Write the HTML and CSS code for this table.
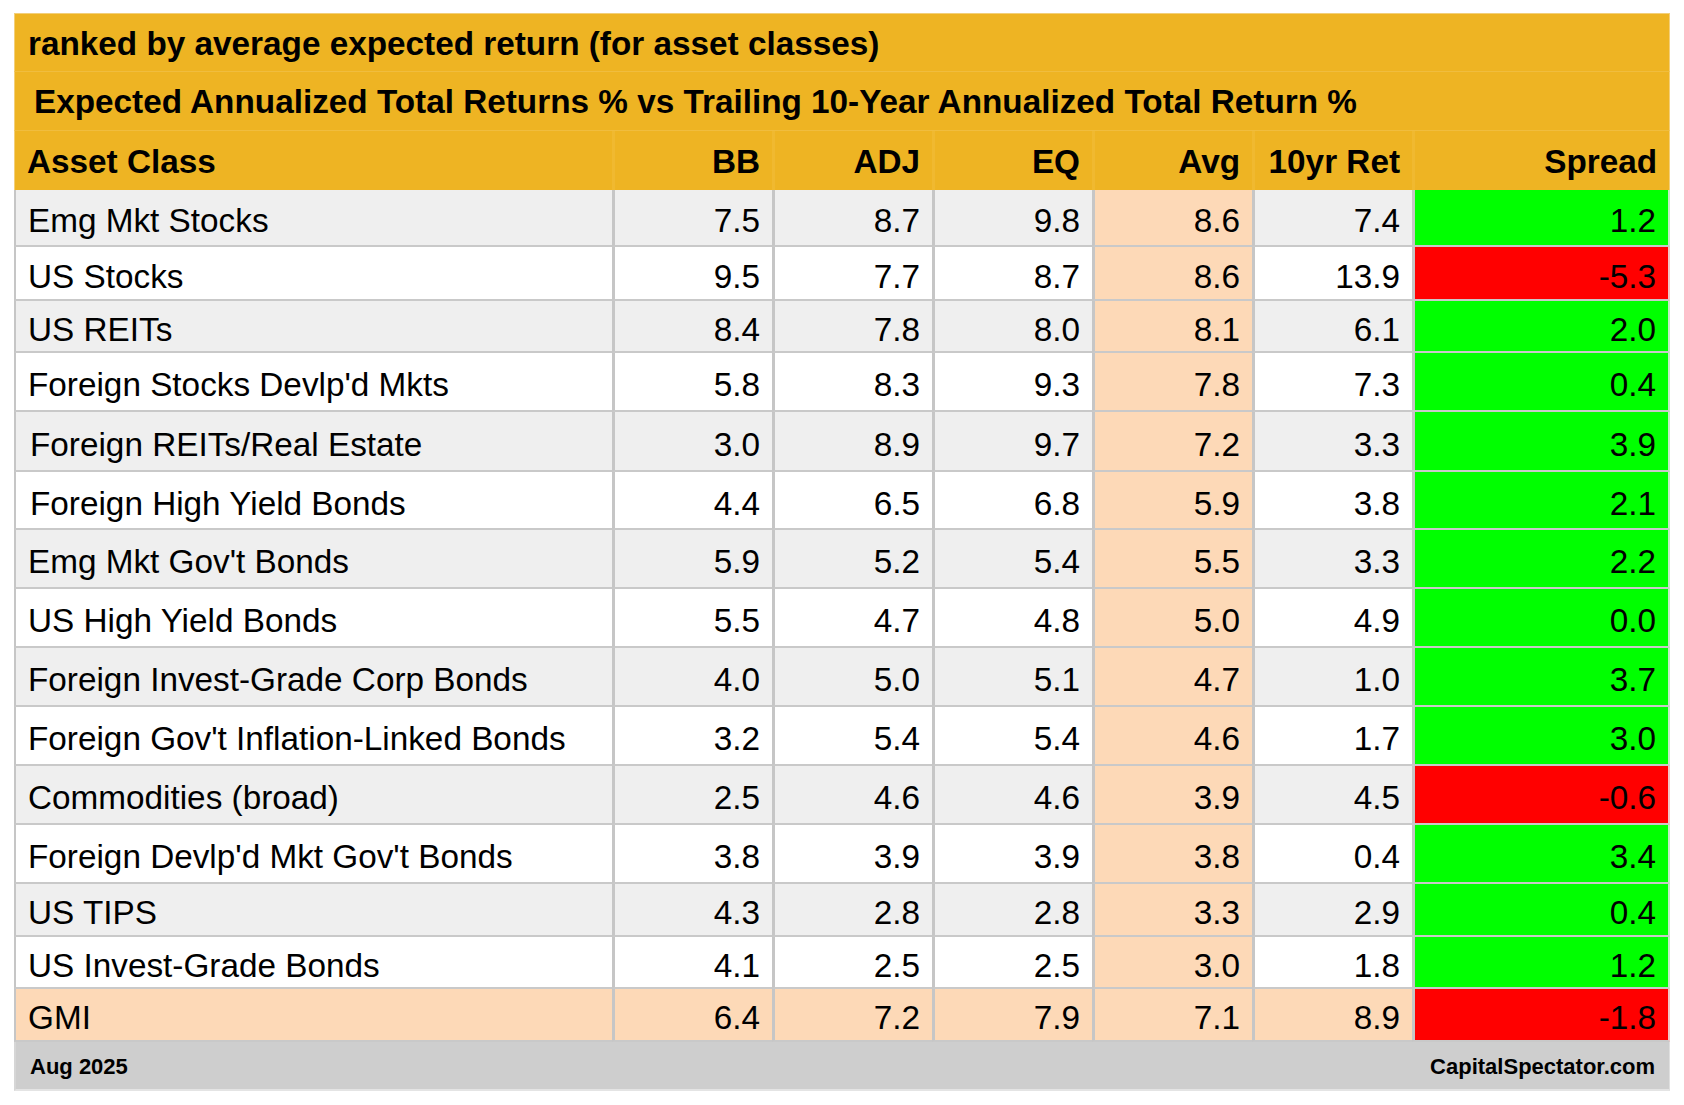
FILE: index.html
```html
<!DOCTYPE html>
<html lang="en">
<head>
<meta charset="utf-8">
<title>Expected Annualized Total Returns</title>
<link rel="stylesheet" href="styles.css">
</head>
<body>
<table class="grid">
  <colgroup>
    <col class="c-name">
    <col class="c-num">
    <col class="c-num">
    <col class="c-num">
    <col class="c-num">
    <col class="c-num">
    <col class="c-spread">
  </colgroup>
  <thead>
    <tr class="title1"><th colspan="7">ranked by average expected return (for asset classes)</th></tr>
    <tr class="title2"><th colspan="7">Expected Annualized Total Returns % vs Trailing 10-Year Annualized Total Return %</th></tr>
    <tr class="colhead">
      <th class="name">Asset Class</th>
      <th>BB</th>
      <th>ADJ</th>
      <th>EQ</th>
      <th>Avg</th>
      <th>10yr Ret</th>
      <th>Spread</th>
    </tr>
  </thead>
  <tbody>
    <tr class="alt h57"><td class="name">Emg Mkt Stocks</td><td>7.5</td><td>8.7</td><td>9.8</td><td class="avg">8.6</td><td>7.4</td><td class="pos">1.2</td></tr>
    <tr class="h54"><td class="name">US Stocks</td><td>9.5</td><td>7.7</td><td>8.7</td><td class="avg">8.6</td><td>13.9</td><td class="neg">-5.3</td></tr>
    <tr class="alt h52"><td class="name">US REITs</td><td>8.4</td><td>7.8</td><td>8.0</td><td class="avg">8.1</td><td>6.1</td><td class="pos">2.0</td></tr>
    <tr class="h59"><td class="name">Foreign Stocks Devlp'd Mkts</td><td>5.8</td><td>8.3</td><td>9.3</td><td class="avg">7.8</td><td>7.3</td><td class="pos">0.4</td></tr>
    <tr class="alt h60"><td class="name ind">Foreign REITs/Real Estate</td><td>3.0</td><td>8.9</td><td>9.7</td><td class="avg">7.2</td><td>3.3</td><td class="pos">3.9</td></tr>
    <tr class="h58"><td class="name ind">Foreign High Yield Bonds</td><td>4.4</td><td>6.5</td><td>6.8</td><td class="avg">5.9</td><td>3.8</td><td class="pos">2.1</td></tr>
    <tr class="alt h59"><td class="name">Emg Mkt Gov't Bonds</td><td>5.9</td><td>5.2</td><td>5.4</td><td class="avg">5.5</td><td>3.3</td><td class="pos">2.2</td></tr>
    <tr class="h59"><td class="name">US High Yield Bonds</td><td>5.5</td><td>4.7</td><td>4.8</td><td class="avg">5.0</td><td>4.9</td><td class="pos">0.0</td></tr>
    <tr class="alt h59"><td class="name">Foreign Invest-Grade Corp Bonds</td><td>4.0</td><td>5.0</td><td>5.1</td><td class="avg">4.7</td><td>1.0</td><td class="pos">3.7</td></tr>
    <tr class="h59"><td class="name">Foreign Gov't Inflation-Linked Bonds</td><td>3.2</td><td>5.4</td><td>5.4</td><td class="avg">4.6</td><td>1.7</td><td class="pos">3.0</td></tr>
    <tr class="alt h59"><td class="name">Commodities (broad)</td><td>2.5</td><td>4.6</td><td>4.6</td><td class="avg">3.9</td><td>4.5</td><td class="neg">-0.6</td></tr>
    <tr class="h59"><td class="name">Foreign Devlp'd Mkt Gov't Bonds</td><td>3.8</td><td>3.9</td><td>3.9</td><td class="avg">3.8</td><td>0.4</td><td class="pos">3.4</td></tr>
    <tr class="alt h53"><td class="name">US TIPS</td><td>4.3</td><td>2.8</td><td>2.8</td><td class="avg">3.3</td><td>2.9</td><td class="pos">0.4</td></tr>
    <tr class="h52"><td class="name">US Invest-Grade Bonds</td><td>4.1</td><td>2.5</td><td>2.5</td><td class="avg">3.0</td><td>1.8</td><td class="pos">1.2</td></tr>
    <tr class="gmi h53"><td class="name">GMI</td><td>6.4</td><td>7.2</td><td>7.9</td><td class="avg">7.1</td><td>8.9</td><td class="neg">-1.8</td></tr>
  </tbody>
  <tfoot>
    <tr><td colspan="6" class="date">Aug 2025</td><td class="site">CapitalSpectator.com</td></tr>
  </tfoot>
</table>
</body>
</html>
```

FILE: styles.css
```css
html, body {
  margin: 0;
  background: #ffffff;
}

body {
  padding: 13px 0 0 14px;
  font-family: "Liberation Sans", Arial, sans-serif;
  color: #000000;
}

.grid {
  width: 1656px;
  table-layout: fixed;
  border-collapse: separate;
  border-spacing: 0;
}

.c-name { width: 598px; }
.c-num { width: 160px; }
.c-spread { width: 258px; }

th, td {
  box-sizing: border-box;
  padding: 0 12px;
  white-space: nowrap;
  overflow: hidden;
}

/* ---------- header ---------- */
thead th {
  background: #eeb423;
  font-weight: bold;
  font-size: 33.3px;
  height: 59px;
  vertical-align: middle;
  padding-top: 2px;
  border-bottom: 1px solid #f0bd3e;
}

.title1 th {
  text-align: left;
  padding-left: 13px;
  border-top: 1px solid #f3cf79;
}

.title2 th {
  text-align: left;
  padding-left: 19px;
}

.colhead th {
  text-align: right;
  border-left: 3px solid #f0b930;
  border-bottom: none;
}

.colhead th.name {
  text-align: left;
  padding-left: 12px;
  border-left: 1px solid #f3cf79;
}

.title1 th,
.title2 th {
  border-left: 1px solid #f3cf79;
  border-right: 1px solid #f3cf79;
}

.colhead th:last-child {
  border-right: 1px solid #f3cf79;
}

/* ---------- body ---------- */
tbody td {
  font-size: 33.3px;
  text-align: right;
  vertical-align: middle;
  padding-top: 7px;
  background: #ffffff;
  border-left: 3px solid #c6c6c6;
  border-bottom: 2px solid #c9c9c9;
}

tbody td.name {
  text-align: left;
  padding-left: 12px;
  border-left: 2px solid #c6c6c6;
}

tbody td.name.ind {
  padding-left: 14px;
}

tbody tr.alt td { background: #efefef; }

tbody td.avg,
tbody tr.alt td.avg { background: #fdd9b7; }

tbody tr.gmi td { background: #fdd9b7; }

tbody td.pos,
tbody tr.alt td.pos {
  background: #00ff00;
  border-right: 2px solid #c8e8c8;
}

tbody td.neg,
tbody tr.alt td.neg,
tbody tr.gmi td.neg {
  background: #ff0000;
  border-right: 2px solid #f0c8c8;
}

tr.h52 td { height: 52px; }
tr.h53 td { height: 53px; }
tr.h54 td { height: 54px; }
tr.h57 td { height: 57px; }
tr.h58 td { height: 58px; }
tr.h59 td { height: 59px; }
tr.h60 td { height: 60px; }

/* ---------- footer ---------- */
tfoot td {
  background: #cecece;
  font-size: 22px;
  font-weight: bold;
  height: 49px;
  vertical-align: middle;
  padding-top: 3px;
  border-bottom: 2px solid #e4e4e4;
}

tfoot td.date {
  text-align: left;
  padding-left: 14px;
  border-left: 2px solid #d6d6d6;
}

tfoot td.site {
  text-align: right;
  padding-right: 14px;
  border-right: 1px solid #e0e0e0;
}
```
